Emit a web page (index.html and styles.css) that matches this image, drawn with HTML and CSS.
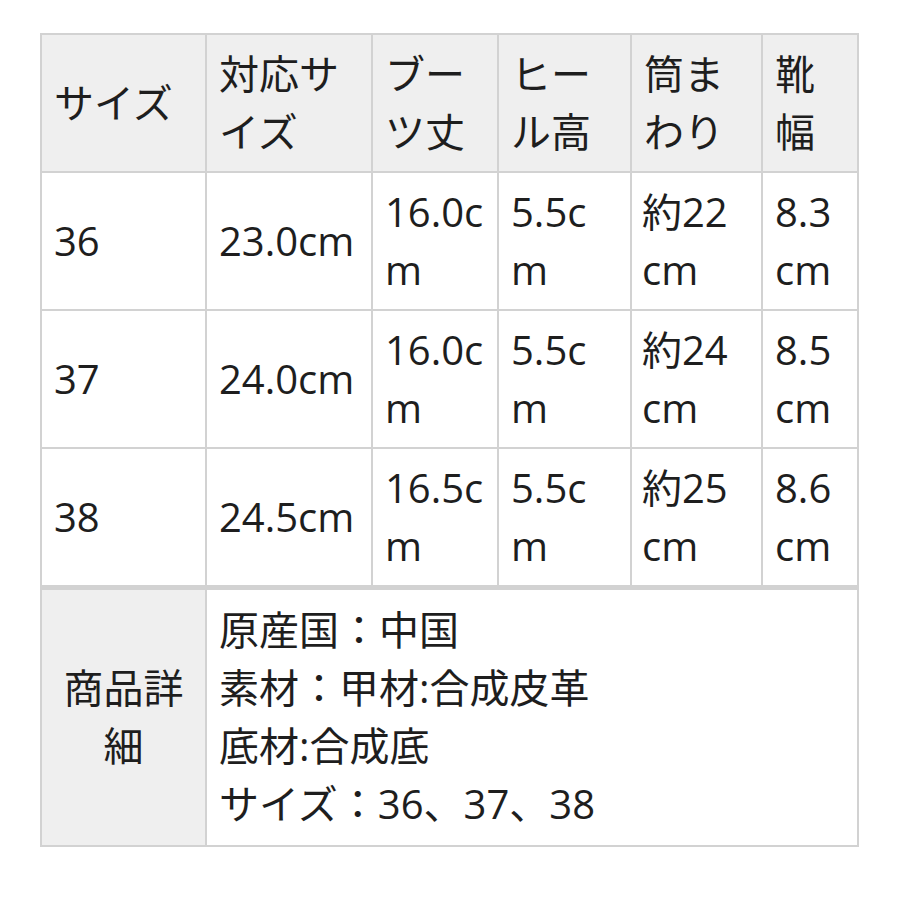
FILE: index.html
```html
<!DOCTYPE html>
<html lang="ja">
<head>
<meta charset="utf-8">
<link rel="stylesheet" href="styles.css">
</head>
<body>
<div class="wrap">
<table class="spec">
<colgroup>
<col class="c1"><col class="c2"><col class="c3"><col class="c4"><col class="c5"><col class="c6">
</colgroup>
<tr class="head">
<th>サイズ</th><th>対応サイズ</th><th>ブーツ丈</th><th>ヒール高</th><th>筒まわり</th><th>靴幅</th>
</tr>
<tr>
<td>36</td><td>23.0cm</td><td>16.0cm</td><td>5.5cm</td><td class="narrow">約22cm</td><td>8.3cm</td>
</tr>
<tr>
<td>37</td><td>24.0cm</td><td>16.0cm</td><td>5.5cm</td><td class="narrow">約24cm</td><td>8.5cm</td>
</tr>
<tr>
<td>38</td><td>24.5cm</td><td>16.5cm</td><td>5.5cm</td><td class="narrow">約25cm</td><td>8.6cm</td>
</tr>
<tr class="detail">
<th class="label">商品詳細</th>
<td colspan="5">原産国：中国<br>素材：甲材:合成皮革<br>底材:合成底<br>サイズ：36、37、38</td>
</tr>
</table>
</div>
</body>
</html>
```

FILE: styles.css
```css
html, body {
  margin: 0;
  padding: 0;
  background: #ffffff;
}
.wrap {
  padding: 33px 0 0 40px;
}
.spec {
  border-collapse: collapse;
  table-layout: fixed;
  width: 817px;
  font-family: "Open Sans", "Noto Sans CJK JP", sans-serif;
  font-size: 40px;
  line-height: 58px;
  color: #1e1e1e;
}
.c1 { width: 165px; }
.c2 { width: 166px; }
.c3 { width: 126px; }
.c4 { width: 133px; }
.c5 { width: 131px; }
.c6 { width: 96px; }
.spec th, .spec td {
  border: 2px solid #d2d2d2;
  padding: 10px 12px;
  text-align: left;
  vertical-align: middle;
  font-weight: normal;
  word-break: break-all;
}
.spec td.narrow {
  padding-left: 10px;
  padding-right: 22px;
}
.head th {
  background: #efefef;
}
.detail th, .detail td {
  border-top: 5px solid #d2d2d2;
  padding-top: 11px;
  padding-bottom: 12px;
}
.detail .label {
  background: #efefef;
  text-align: center;
  padding-left: 20px;
  padding-right: 20px;
}
```
